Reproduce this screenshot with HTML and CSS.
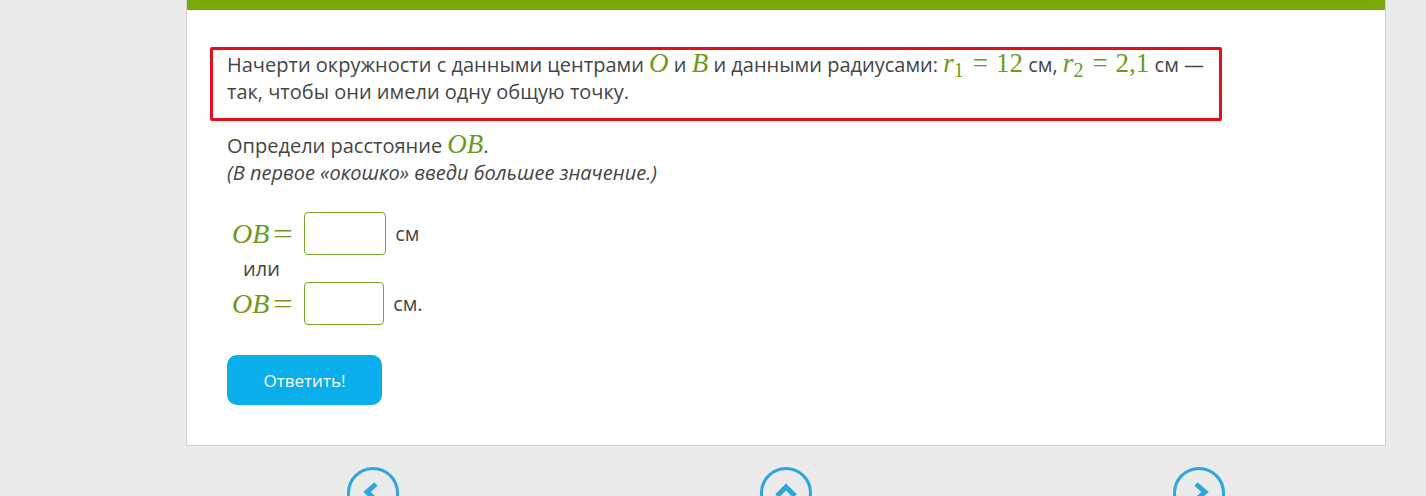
FILE: index.html
```html
<!DOCTYPE html>
<html lang="ru">
<head>
<meta charset="utf-8">
<link rel="stylesheet" href="styles.css">
</head>
<body>
<div class="card">
  <div class="topbar"></div>
  <div class="content">
    <div class="task">Начерти окружности с данными центрами <span class="m">O</span> и <span class="m">B</span> и данными радиусами: <span class="m">r<sub>1</sub></span><span class="mn"><span class="op">=</span>12</span> см, <span class="m">r<sub>2</sub></span><span class="mn"><span class="op">=</span>2,1</span> см&nbsp;— так, чтобы они имели одну общую точку.</div>
    <p class="q">Определи расстояние <span class="m">OB</span>.</p>
    <p class="hint">(В первое «окошко» введи большее значение.)</p>
    <div class="answers">
      <div class="row"><span class="m big">OB</span><span class="mn big eq">=</span><span class="box w1"></span><span class="unit">см</span></div>
      <div class="or">или</div>
      <div class="row"><span class="m big">OB</span><span class="mn big eq">=</span><span class="box w2"></span><span class="unit u2">см.</span></div>
    </div>
    <button class="btn">Ответить!</button>
  </div>
</div>
<div class="nav">
  <svg class="ic" width="54" height="54" viewBox="0 0 54 54"><circle cx="27" cy="27" r="24.5" fill="none" stroke="#2ea6db" stroke-width="3"/><path d="M30 18 L21 26 L30 34" fill="none" stroke="#2ea6db" stroke-width="5"/></svg>
  <svg class="ic" width="54" height="54" viewBox="0 0 54 54"><circle cx="27" cy="27" r="24.5" fill="none" stroke="#2ea6db" stroke-width="3"/><path d="M18 30 L27 21 L36 30" fill="none" stroke="#2ea6db" stroke-width="5"/></svg>
  <svg class="ic" width="54" height="54" viewBox="0 0 54 54"><circle cx="27" cy="27" r="24.5" fill="none" stroke="#2ea6db" stroke-width="3"/><path d="M24 18 L33 26 L24 34" fill="none" stroke="#2ea6db" stroke-width="5"/></svg>
</div>
</body>
</html>
```
FILE: styles.css
```css
html, body { margin: 0; padding: 0; }
body {
  background: #ebebeb;
  font-family: "Open Sans", "Noto Sans", sans-serif;
  color: #454545;
  overflow: hidden;
  height: 496px;
}
.card {
  margin-left: 186px;
  width: 1198px;
  background: #fff;
  border: 1px solid #cfcfcf;
  border-top: none;
  height: 445px;
}
.topbar { height: 10px; background: #78a90a; }
.content { padding: 37px 0 0 40px; }
.task {
  margin-left: -17px;
  width: 984px;
  border: 3px solid #e3101a;
  border-radius: 2px;
  padding: 1px 8px 13px 14px;
  font-size: 20px;
  line-height: 27px;
}
.m {
  font-family: "Liberation Serif", "DejaVu Serif", serif;
  font-style: italic;
  color: #6c9a1c;
  font-size: 27px;
  line-height: 0;
}
.m sub { font-style: normal; font-size: 20px; vertical-align: -5px; line-height: 0; }
.mn {
  font-family: "Liberation Serif", "DejaVu Serif", serif;
  color: #6c9a1c;
  font-size: 27px;
  line-height: 0;
}
.op { padding: 0 8px 0 9px; }
p { margin: 0; font-size: 20px; line-height: 27px; }
.q { margin-top: 11px; }
.hint { font-style: italic; }
.answers { margin-top: 26px; }
.row { display: flex; align-items: center; height: 43px; margin-left: 5px; }
.big { font-size: 28px; line-height: 1; }
.eq { margin: 0 13px 0 6px; transform: scaleX(1.25); }
.box {
  display: block;
  height: 41px;
  border: 1px solid #7aa52a;
  border-radius: 4px;
  background: #fff;
}
.w1 { width: 80px; }
.w2 { width: 78px; }
.unit { font-size: 20px; margin-left: 9px; }
.u2 { margin-left: 9px; }
.or { font-size: 20px; line-height: 27px; margin: 0 0 0 16px; height: 27px; }
.btn {
  display: block;
  margin-top: 30px;
  width: 155px;
  height: 50px;
  border: none;
  border-radius: 10px;
  background: #0aaeea;
  color: #fff;
  font-family: "Open Sans", "Noto Sans", sans-serif;
  font-size: 17px;
  padding: 0;
}
.nav {
  display: flex;
  margin-left: 346px;
  margin-top: 20px;
  gap: 359px;
}
.ic { display: block; }
```
